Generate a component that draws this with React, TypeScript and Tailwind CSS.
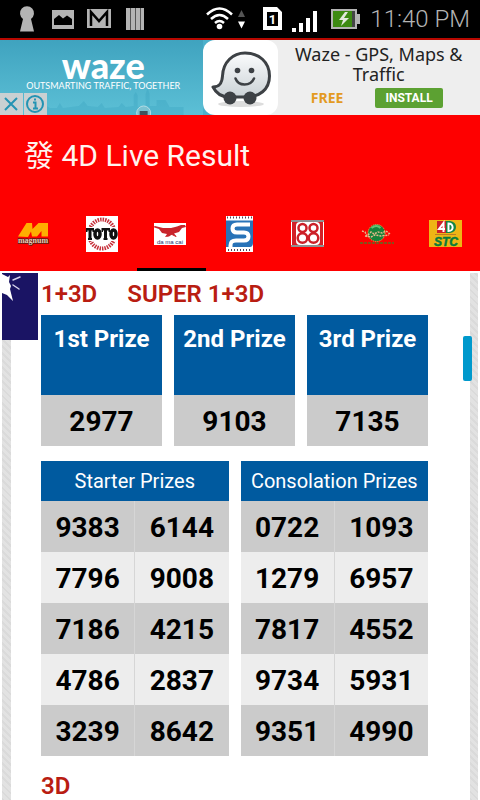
import { useState } from "react";
import type { ReactNode } from "react";

interface PrizeTableProps {
  title: string;
  rows: string[][];
}

const topPrizes = [
  { name: "1st Prize", number: "2977" },
  { name: "2nd Prize", number: "9103" },
  { name: "3rd Prize", number: "7135" },
];

const starter = [
  ["9383", "6144"],
  ["7796", "9008"],
  ["7186", "4215"],
  ["4786", "2837"],
  ["3239", "8642"],
];

const consolation = [
  ["0722", "1093"],
  ["1279", "6957"],
  ["7817", "4552"],
  ["9734", "5931"],
  ["9351", "4990"],
];

const tabs: { name: string; logo: ReactNode }[] = [
  {
    name: "Magnum",
    logo: (
      <>
        <path d="M2 20.500L10.500 7h5.500l.5 6L22.500 7H32v13.500h-6.500v-5.500l-4.500 5.500h-5l-1-5-3 5.500z" fill="#ffae00" />
        <text x="17" y="27" textAnchor="middle" fontFamily="Liberation Serif, serif" fontWeight="700" fontSize="8" fill="#e8c9b8" stroke="#5b1d12" strokeWidth="1.500" paintOrder="stroke">
          magnum
        </text>
      </>
    ),
  },
  {
    name: "Toto",
    logo: (
      <>
        <path d="M1 0h32v36H1z" fill="#fff" />
        <ellipse cx="17" cy="18" rx="13" ry="14.500" fill="none" stroke="#c6303a" strokeWidth="4" strokeDasharray="1.500 1" />
        <path d="M1 11h32v14H1z" fill="#fff" />
        <g fill="none" stroke="#111">
          <path d="M5 13v11M20.500 13v11" strokeWidth="3" />
          <ellipse cx="12.500" cy="18" rx="2.500" ry="4" strokeWidth="3.500" />
          <ellipse cx="28.500" cy="18" rx="2.500" ry="4" strokeWidth="3.500" />
        </g>
        <path d="M1 12h8v4H7.500v-1.500h-5V16H1zM16.500 12H25v4h-1.500v-1.500H18V16h-1.500zM3 22h4v2H3zM18.500 22h4v2h-4z" fill="#111" />
      </>
    ),
  },
  {
    name: "Da Ma Cai",
    logo: (
      <>
        <path d="M1 7h32v22H1z" fill="#fff" />
        <path d="M2 10l8 2h8l6-1.500 4-1.500h4l1 2-4 1-3 4-5 1.500 3 3.500-5-2.500-3 2-4 .5 2-3-5-1-3-4-6-2z" fill="#c9242b" />
        <path d="M14 20l4-2M18 18l5 2.500" stroke="#c9242b" strokeWidth="1" />
        <text x="17" y="28" textAnchor="middle" fontFamily="Liberation Sans, sans-serif" fontSize="6" fill="#23306e">
          da ma cai
        </text>
      </>
    ),
  },
  {
    name: "Sports",
    logo: (
      <>
        <path d="M4 0h27v36H4z" fill="#fff" />
        <path d="M4 4.500h27V27c0 2-1 4-3 4H4z" fill="#2873b8" />
        <path d="M5 1.500h25M6 34h24" stroke="#53465c" strokeWidth="2" strokeDasharray="1 2" />
        <path d="M28 8.500H15c-3 0-4.500 1.500-4.500 4s1.500 4 4.500 4h7c3 0 4.500 1.500 4.500 4s-1.500 4-4.500 4h-8c-4 0-5.500 1.500-5.500 5V33" fill="none" stroke="#fff" strokeWidth="4" />
      </>
    ),
  },
  {
    name: "88",
    logo: (
      <>
        <path d="M0 4h33v27H0z" fill="#fff" />
        <path d="M0 5h33M0 30h33" stroke="#222" strokeWidth="1" />
        <path d="M1 6h31v23H1z" fill="#d32027" />
        <rect x="5" y="6" width="24" height="23" rx="4" fill="#fff" />
        <g fill="none" stroke="#cc2028" strokeWidth="2.500">
          <circle cx="11.500" cy="12" r="4" />
          <circle cx="11.500" cy="22" r="4.800" />
          <circle cx="22.500" cy="12" r="4" />
          <circle cx="22.500" cy="22" r="4.800" />
        </g>
      </>
    ),
  },
  {
    name: "Sabah",
    logo: (
      <>
        <circle cx="17.500" cy="17" r="8.500" fill="#16833b" stroke="#e3bd55" strokeWidth="1" strokeDasharray="1 1" />
        <path d="M12.500 12q5-4 9 0" fill="none" stroke="#63c276" strokeWidth="2" />
        <path d="M3 15l3 1 2 4 4-4 3 2 4-2 4 1 4-2 4 3M6 20l6 1 4-2 6 1 8-1" fill="none" stroke="#e3b98c" strokeWidth="1.500" strokeDasharray="2 1" />
        <path d="M1 27h34" stroke="#83521a" strokeWidth="2" strokeDasharray="3 1" />
      </>
    ),
  },
  {
    name: "STC 4D",
    logo: (
      <>
        <path d="M1 4h33v27H1z" fill="#efb515" />
        <path d="M9 5h9v12H9z" fill="#cf2027" />
        <path d="M18 5h4q6 1 6 6t-6 6h-4z" fill="#128545" />
        <path d="M15.500 16V7L11 13h6M20.500 7.500v7.500c6 0 5-7.500 0-7.500z" fill="none" stroke="#fff" strokeWidth="2" />
        <path d="M7 18.500h21" stroke="#bd7b21" strokeWidth="1" />
        <text x="18" y="30" textAnchor="middle" fontFamily="Liberation Sans, sans-serif" fontWeight="700" fontStyle="italic" fontSize="12" fill="#087b3c" stroke="#087b3c" strokeWidth=".5">
          STC
        </text>
      </>
    ),
  },
];

function StatusBar() {
  return (
    <header className="flex h-10 items-center border-b-2 border-[#b80800] bg-black px-2.5 text-[#b4b4b4]">
      <svg className="h-[38px] w-36 shrink-0" viewBox="10 0 144 38" fill="#b4b4b4">
        <path d="M23 19a7 7 0 1 1 8 0L34 31.500H20z" />
        <path fillRule="evenodd" d="M52 10h22v19H52zm2 13.500V25h18v-6l-5-3.500-4 3-4-3.500-5 4z" />
        <path d="M87 9h24v19H87z" />
        <path d="M91 26V12l8 9 8-9v14" fill="none" stroke="#000" strokeWidth="2.500" />
        <path d="M126 8h18v22h-18z" />
        <path d="M130.500 8v22M135.500 8v22M140.500 8v22" stroke="#555" strokeWidth="1" />
      </svg>
      <svg className="ml-auto h-[38px] w-[158px] shrink-0" viewBox="203 0 158 38">
        <g fill="none" stroke="#fff" strokeWidth="2.500">
          <path d="M208 14.500q12.500-12 25 0M212 19q8.500-8 17 0M216 23q4.500-4 9 0" />
        </g>
        <circle cx="220.500" cy="26.500" r="2.800" fill="#fff" />
        <path d="M239 17l3.500-7 3.500 7z" fill="#555" />
        <path d="M239 21.500h7l-3.500 7z" fill="#fff" />
        <path fillRule="evenodd" d="M264 7h14l5 5v18h-19zm4 5v14h11V12z" fill="#fff" />
        <text x="273.500" y="24" textAnchor="middle" fontFamily="Roboto, sans-serif" fontWeight="700" fontSize="13" fill="#fff">
          1
        </text>
        <path d="M293 28h4v4h-4zM300 23h4v9h-4zM307 18h4v14h-4zM314 11h4v21h-4z" fill="#fff" />
        <path d="M332 9h26v5h3v10h-3v5h-26z" fill="#b4b4b4" />
        <path d="M334 11h19v16h-19z" fill="#3d8a12" />
        <path d="M353 11h3v16h-3z" fill="#444" />
        <path d="M346 12l-6 8h4l-2 6 8-8h-5l4-6z" fill="#e2e8dc" />
      </svg>
      <time className="ml-2.5 text-2xl font-light whitespace-nowrap">11:40 PM</time>
    </header>
  );
}

function AdBanner() {
  return (
    <section aria-label="Advertisement" className="flex h-[75px] bg-[#eee]">
      <div className="relative flex flex-1 flex-col items-center bg-linear-to-b from-[#3fa3bf] to-[#5cc0d6] pt-2.5 text-white">
        <svg className="absolute inset-x-0 bottom-0 h-7 w-full" viewBox="0 0 203 28" preserveAspectRatio="none">
          <path d="M45 28V18l5 3h7l3-5 3 5 16-2 5-5 4 5 10 1 4-4 3 5 14-1 3-4 4 4 8-1V8l2-3 2 3v12l8-1V7l2-6 2 6v12h7v-6h9l4 7h14v8z" fill="#359fbe" opacity=".3" />
          <circle cx="144" cy="26" r="7" fill="#7bc2d1" stroke="#b3dce5" strokeWidth="1" />
          <path d="M140 24h8v4h-8z" fill="#3e535d" />
        </svg>
        <h2 className="ml-1 font-['Lato'] text-4xl leading-[30px] font-black">waze</h2>
        <p className="ml-1 font-['Lato'] text-[9px] leading-3 whitespace-nowrap">OUTSMARTING TRAFFIC, TOGETHER</p>
        <div className="absolute bottom-0 left-0 flex gap-px text-[#2493b3]">
          <button aria-label="Close ad" className="bg-[#c9d0d2]">
            <svg className="h-[22px] w-[23px]" viewBox="0 0 23 22" fill="none" stroke="currentColor" strokeWidth="2">
              <path d="M5 5l12 12M17 5L5 17" />
            </svg>
          </button>
          <button aria-label="Ad information" className="bg-[#c9d0d2]">
            <svg className="h-[22px] w-[23px]" viewBox="0 0 23 22" fill="none" stroke="currentColor" strokeWidth="2">
              <circle cx="11" cy="11" r="8" />
              <path d="M9 9.500h2.500V15M9 15.500h5M10 6.500h2" />
            </svg>
          </button>
        </div>
      </div>
      <div className="bg-linear-to-r from-[#4bb0cb] from-50% to-[#eee] to-50%">
        <svg className="h-[75px] w-[75px] rounded-xl bg-white" viewBox="0 0 75 75">
          <defs>
            <linearGradient id="face" x2="0" y2="1">
              <stop stopColor="#fbfcfd" />
              <stop offset="1" stopColor="#cbd2d6" />
            </linearGradient>
          </defs>
          <ellipse cx="38" cy="64" rx="23" ry="3" fill="#ddd" />
          <path d="M10 47c7 0 9-4 9.500-11C20 22 30 13 42 13c14 0 24.500 9 24.500 23S56 57 43 57H26c-7 0-13-4-16-10z" fill="url(#face)" stroke="#3d4145" strokeWidth="3" strokeLinejoin="round" />
          <circle cx="27" cy="58" r="6.500" fill="#3d4145" />
          <circle cx="47" cy="58" r="6.500" fill="#3d4145" />
          <circle cx="34.500" cy="30.500" r="2.800" fill="#3d4145" />
          <circle cx="48.500" cy="30.500" r="2.800" fill="#3d4145" />
          <path d="M32.500 38.500c3 8 15 8 18.500 0" fill="none" stroke="#3d4145" strokeWidth="2.500" strokeLinecap="round" />
        </svg>
      </div>
      <div className="flex flex-1 flex-col items-center pt-1 font-['Noto_Sans']">
        <h3 className="max-w-44 text-center text-lg leading-5 text-[#222]">Waze - GPS, Maps &amp; Traffic</h3>
        <div className="mt-1 flex items-center gap-8 pr-1">
          <span className="text-sm leading-5 font-bold text-[#e39a22]">FREE</span>
          <button className="h-5 rounded-xs bg-[#5ca132] px-2.5 font-['Roboto'] text-xs font-bold text-white">INSTALL</button>
        </div>
      </div>
    </section>
  );
}

function PrizeTable({ title, rows }: PrizeTableProps) {
  return (
    <table className="w-full table-fixed border-collapse text-center">
      <thead>
        <tr>
          <th colSpan={2} className="h-10 bg-[#005a9f] p-0 text-xl font-normal text-white">
            {title}
          </th>
        </tr>
      </thead>
      <tbody className="text-[28px] leading-8 font-bold">
        {rows.map((row) => (
          <tr key={row[0]} className="h-[51px] odd:bg-[#cbcbcb] even:bg-[#ededed]">
            <td className="border-r border-[#d6d6d6] p-0 pt-0.5">{row[0]}</td>
            <td className="p-0 pt-0.5">{row[1]}</td>
          </tr>
        ))}
      </tbody>
    </table>
  );
}

const strip = "bg-[repeating-linear-gradient(45deg,#dadada_0px,#dadada_2px,#e2e2e2_2px,#e2e2e2_5px)]";

export default function App() {
  const [active, setActive] = useState(2);

  return (
    <div className="flex min-h-screen flex-col bg-white font-['Roboto','Noto_Sans_CJK_TC',sans-serif] text-black">
      <StatusBar />
      <AdBanner />

      <div className="bg-[#fe0000]">
        <h1 className="flex h-20 items-center px-6 pt-0.5 text-[30px] leading-9 text-[#fff3ee]">發 4D Live Result</h1>
        <nav className="flex h-[76px]">
          {tabs.map((tab, i) => (
            <button
              key={tab.name}
              aria-label={tab.name}
              onClick={() => setActive(i)}
              className={`flex flex-1 items-center justify-center border-b-3 pt-1 ${i === active ? "border-black" : "border-transparent"}`}
            >
              <svg className="h-9 w-9" viewBox="0 0 36 36">
                {tab.logo}
              </svg>
            </button>
          ))}
        </nav>
      </div>

      <main className="relative flex flex-1 px-0.5 pt-0.5">
        <div className={`w-[9px] ${strip}`} />
        <div className="flex-1 pr-[42px] pl-[30px]">
          <h2 className="flex gap-[30px] pt-[7px] text-2xl leading-7 font-semibold text-[#b91d12]">
            <span>1+3D</span>
            <span>SUPER 1+3D</span>
          </h2>
          <div className="mt-[7px] grid grid-cols-3 gap-3">
            {topPrizes.map((prize) => (
              <table key={prize.name} className="w-full border-collapse text-center font-bold">
                <thead>
                  <tr>
                    <th className="h-20 bg-[#005a9f] p-0 pt-2 align-top text-2xl leading-8 text-white">{prize.name}</th>
                  </tr>
                </thead>
                <tbody>
                  <tr>
                    <td className="h-[51px] bg-[#cbcbcb] p-0 pt-0.5 text-[28px] leading-8">{prize.number}</td>
                  </tr>
                </tbody>
              </table>
            ))}
          </div>
          <div className="mt-[15px] grid grid-cols-2 gap-3">
            <PrizeTable title="Starter Prizes" rows={starter} />
            <PrizeTable title="Consolation Prizes" rows={consolation} />
          </div>
          <h2 className="mt-4 text-2xl leading-7 font-semibold text-[#b91d12]">3D</h2>
        </div>
        <div className={`w-2 ${strip}`} />

        <svg className="absolute top-0.5 left-0.5 h-[67px] w-9 bg-[#1a1464]" viewBox="0 0 36 67">
          <path d="M0 1l6 3 2-2-1 7 2 4-1 3 3 12-6-6-5-2z" fill="#fff" />
          <path d="M11 7l7-3M11 12l6 4" fill="none" stroke="#d5d2ed" strokeWidth="1.500" strokeLinecap="round" />
        </svg>
        <div className="absolute top-[65px] right-2 h-[45px] w-[9px] rounded-xs bg-[#0099cc]" />
      </main>
    </div>
  );
}
